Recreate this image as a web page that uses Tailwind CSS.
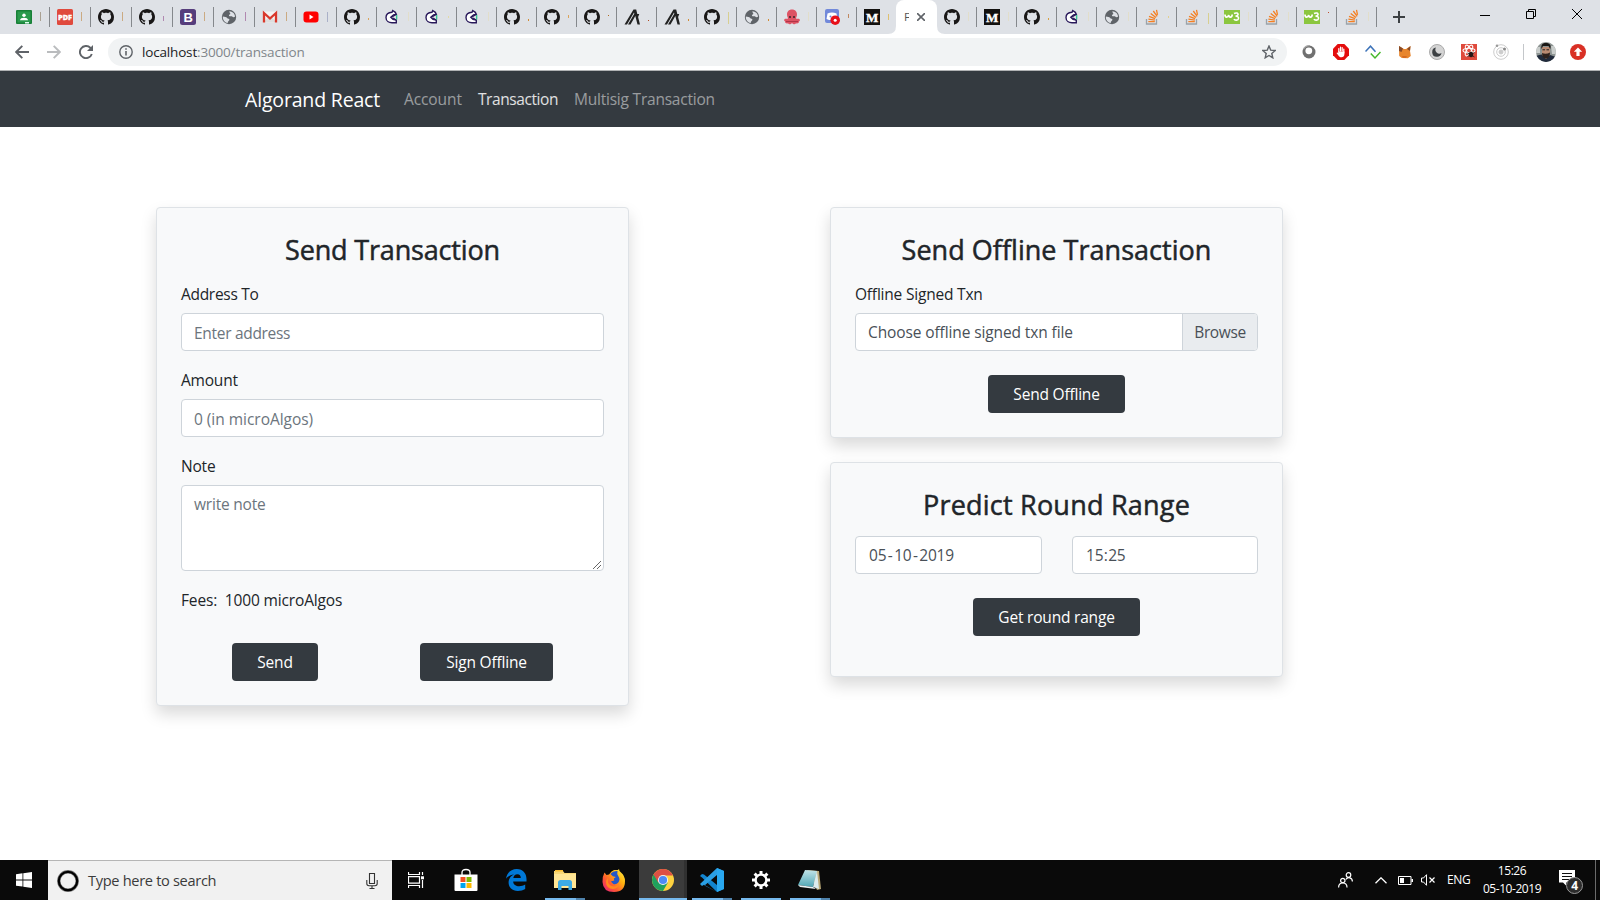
<!DOCTYPE html>
<html lang="en">
<head>
<meta charset="utf-8">
<title>Algorand React</title>
<script src="https://cdn.jsdelivr.net/npm/@tailwindcss/browser@4"></script>
</head>
<body class="w-[1600px] h-[900px] overflow-hidden bg-white flex flex-col text-[15.500px] tracking-[-0.2px] text-[#212529]" style="font-family:'Open Sans','Noto Sans',sans-serif">
<svg class="hidden">
  <symbol id="github" viewBox="0 0 16 16"><path fill="#191717" d="M8 0C3.58 0 0 3.58 0 8c0 3.54 2.29 6.53 5.47 7.59.4.07.55-.17.55-.38 0-.19-.01-.82-.01-1.49-2.01.37-2.53-.49-2.69-.94-.09-.23-.48-.94-.82-1.13-.28-.15-.68-.52-.01-.53.63-.01 1.08.58 1.23.82.72 1.21 1.87.87 2.33.66.07-.52.28-.87.51-1.07-1.78-.2-3.64-.89-3.64-3.95 0-.87.31-1.59.82-2.15-.08-.2-.36-1.02.08-2.12 0 0 .67-.21 2.2.82.64-.18 1.32-.27 2-.27s1.36.09 2 .27c1.53-1.04 2.2-.82 2.2-.82.44 1.1.16 1.92.08 2.12.51.56.82 1.27.82 2.15 0 3.07-1.87 3.75-3.65 3.95.29.25.54.73.54 1.48 0 1.07-.01 1.93-.01 2.2 0 .21.15.46.55.38A8.01 8.01 0 0 0 16 8c0-4.42-3.58-8-8-8z"/></symbol>
  <symbol id="classroom" viewBox="0 0 16 16"><rect y="1" width="16" height="14" rx="1" fill="#188038"/><rect x="1.5" y="2.5" width="13" height="11" fill="#2a9a4c"/><circle cx="8" cy="6.2" r="1.7" fill="#fff"/><path d="M4 11.3c0-1.700 2-2.500 4-2.500s4 .8 4 2.500z" fill="#fff"/><rect x="9" y="13" width="4" height="1.500" fill="#dfe"/></symbol>
  <symbol id="pdf" viewBox="0 0 16 16"><rect width="16" height="16" rx="1.500" fill="#e04a3d"/><text x="8" y="11" text-anchor="middle" textLength="14" lengthAdjust="spacingAndGlyphs" font-family="Open Sans" font-weight="800" font-size="7.500" letter-spacing="0" fill="#fff" stroke="#fff" stroke-width=".3">PDF</text></symbol>
  <symbol id="boot" viewBox="0 0 16 16"><rect width="16" height="16" rx="2.500" fill="#563d7c"/><text x="8.200" y="12.700" text-anchor="middle" font-family="Liberation Sans" font-weight="700" font-size="13" fill="#fff">B</text></symbol>
  <symbol id="globe" viewBox="0 0 16 16"><circle cx="8" cy="8" r="7.200" fill="#5f6368"/><path d="M1.800 7.500c2 .2 3.600.4 4.300 1.400.5.8 2.400.3 2.300 1.900-.1 1-1.600 1.200-1.700 3.200C3.500 13.500 1.600 10.500 1.800 7.500zM8.500 2.200c2.800.2 5.300 2.300 5.600 5.200-.9 1.200-2.300.9-2.900.2-.7-.8-2.700.2-3.200-.9-.4-1.200 1.500-1.200 1.300-2.300-.1-.8-1.300-1-.8-2.200z" fill="#dee1e6"/></symbol>
  <symbol id="gmail" viewBox="0 0 16 16"><path d="M1 2.500h14v11H1z" fill="#f3f3f3"/><path d="M1 13.500h14L8 7z" fill="#ddd"/><path d="M2 13.500V4l6 5.500L14 4v9.500" fill="none" stroke="#d9382c" stroke-width="2.300"/></symbol>
  <symbol id="yt" viewBox="0 0 16 16"><rect x=".5" y="2.500" width="15" height="11" rx="3" fill="#f00"/><path d="m6.500 5.500 4 2.500-4 2.500z" fill="#fff"/></symbol>
  <symbol id="dev" viewBox="0 0 16 16"><path d="M12.300 5.300 11.300 3.300 8.700 1.500 8 3.300C4.500 3.500 2 5.500 2 8.500c0 3.500 3 5.300 6 5.300h4.300V11L9 10.300 6.800 8.200 9.500 6z" fill="#fff" stroke="#29195a" stroke-width="1.400"/><path d="M7.500 8.200 12 5.500M9 9l3 2" stroke="#29195a" stroke-width="1.200"/><path d="M12.700 6v4.500" stroke="#22c08a" stroke-width="1.200"/></symbol>
  <symbol id="algo" viewBox="0 0 16 16"><path d="M.5 15.500 9.500.5h2.700L13.300 5h2l-1.200 3 1.900 7.500h-2.500L11.300 7l-4.800 8.500H4L10.300 4.700 10 3.600 3 15.500z" fill="#222"/></symbol>
  <symbol id="octo" viewBox="0 0 16 16"><path d="M8 .5c-3.300 0-5 2.300-5 5 0 1.800.8 2.700 1 3.800-.4 1.200-2.200 0-3.300.7-.9.700-.7 2.200.3 2.300 0 1.800 1.500 2.700 3 2 .8 1.500 3 1 4-.3 1 1.300 3.200 1.800 4 .3 1.500.7 3-.2 3-2 1-.1 1.200-1.600.3-2.300-1.100-.7-2.900.5-3.300-.7.2-1.100 1-2 1-3.800 0-2.700-1.700-5-5-5z" fill="#dd5364"/><path d="M2 12.500h12" stroke="#b03447"/><circle cx="6" cy="8" r=".9" fill="#222"/><circle cx="10" cy="8" r=".9" fill="#222"/></symbol>
  <symbol id="discord" viewBox="0 0 16 16"><rect x="1" width="14" height="14" rx="2" fill="#7289da"/><path d="M3.500 4.500q4.500-2 9 0l1 5.500-2.500 1H5l-2.500-1z" fill="#fff"/><circle cx="6.500" cy="7.500" r="1" fill="#7289da"/><circle cx="11.200" cy="11.200" r="4.800" fill="#e8101a"/><circle cx="11.200" cy="11.200" r="1.500" fill="#fff"/></symbol>
  <symbol id="medium" viewBox="0 0 16 16"><rect width="16" height="16" fill="#12100e"/><text x="8" y="12.600" text-anchor="middle" font-family="Liberation Serif" font-weight="700" font-size="13" fill="#fff" stroke="#fff" stroke-width=".4">M</text></symbol>
  <symbol id="so" viewBox="0 0 16 16"><path d="M2.500 10v5h10v-5" fill="none" stroke="#9aa3aa" stroke-width="1.300"/><path d="M4.300 12.700h6.500M4.400 10.100l6.500 1M5 7.300l6.100 2.300M6.700 4.400l5.300 4M9.300 2l3.900 5.300M12.500.8l1 5" stroke="#f48024" stroke-width="1.300"/></symbol>
  <symbol id="w3" viewBox="0 0 16 16"><rect y="1" width="16" height="14" fill="#8bc63f"/><path d="M1 5.500c0 3.500 3 3.500 3.700.5.300 3 3.300 3 3.500-.5" fill="none" stroke="#fff" stroke-width="1.700"/><path d="M10 4.500c1.800-1 4.500-.6 4 1.200-.3 1-1.500 1.300-2.500 1.500 1.700-.2 3.300.6 3 2.300-.3 2-3.700 2.200-4.500.5" fill="none" stroke="#fff" stroke-width="1.600"/></symbol>
</svg>

<!-- Tab strip -->
<div class="h-[34px] shrink-0 bg-[#dee1e6] flex items-stretch pl-[9px]">
  <div id="tabs" class="flex"></div>
  <div class="w-11 flex items-center justify-center"><svg class="w-3 h-3" viewBox="0 0 12 12"><path d="M6 0v12M0 6h12" stroke="#3c4043" stroke-width="2"/></svg></div>
  <div class="flex-1"></div>
  <div class="flex w-[138px] h-7">
    <div class="w-[46px] flex items-center justify-center pt-px"><svg class="w-[10px] h-[10px]" viewBox="0 0 10 10"><path d="M0 5.500h10" stroke="#000"/></svg></div>
    <div class="w-[46px] flex items-center justify-center"><svg class="w-[10px] h-[10px]" viewBox="0 0 10 10"><path d="M.5 2.500h7v7h-7zM2.500 2.500v-2h7v7h-2" fill="none" stroke="#000"/></svg></div>
    <div class="w-[46px] flex items-center justify-center"><svg class="w-[10px] h-[10px]" viewBox="0 0 10 10"><path d="m0 0 10 10M10 0 0 10" stroke="#000"/></svg></div>
  </div>
</div>

<!-- Address toolbar -->
<div class="h-9 shrink-0 bg-white flex items-center">
  <div class="w-[108px] flex items-center pl-[15px] gap-[18px]">
    <svg class="w-[14px] h-[14px]" viewBox="0 0 14 14"><path d="M14 7H1.500M7.300.8 1.200 7l6.100 6.200" fill="none" stroke="#5f6368" stroke-width="1.900"/></svg>
    <svg class="w-[14px] h-[14px]" viewBox="0 0 14 14"><path d="M0 7h12.500M6.700.8 12.800 7l-6.100 6.200" fill="none" stroke="#babcbe" stroke-width="1.900"/></svg>
    <svg class="w-[14px] h-[14px]" viewBox="0 0 14 14"><path d="M12.800 9A6.100 6.100 0 1 1 11.300 2.700L13 4.400" fill="none" stroke="#5f6368" stroke-width="1.900"/><path d="M14 0v6H8z" fill="#5f6368"/></svg>
  </div>
  <div class="w-[1179px] h-7 rounded-full bg-[#f1f3f4] flex items-center pl-[11px] pr-[11px]">
    <svg class="w-[14px] h-[14px]" viewBox="0 0 14 14"><circle cx="7" cy="7" r="6.200" fill="none" stroke="#5f6368" stroke-width="1.400"/><path d="M7 6v4.500M7 3.300v1.500" stroke="#5f6368" stroke-width="1.600"/></svg>
    <div class="ml-[9px] text-[13.500px] tracking-[-0.17px] leading-7 text-[#80868b]"><span class="text-[#202124]">localhost</span>:3000/transaction</div>
    <svg class="ml-auto w-[14px] h-[14px]" viewBox="0 0 14 14"><path d="m7 1 1.700 4.100 4.500.4-3.400 2.900 1 4.400L7 10.500l-3.800 2.300 1-4.400L.8 5.500l4.500-.4z" fill="none" stroke="#5f6368" stroke-width="1.400"/></svg>
  </div>
  <div class="flex items-center ml-[14px] gap-4">
    <svg class="w-4 h-4" viewBox="0 0 16 16"><circle cx="8" cy="8" r="6.500" fill="#707070"/><circle cx="7.800" cy="6.800" r="3.400" fill="#fff"/><path d="M2.500 5A6.500 6.500 0 0 1 9 1.600" stroke="#aaa" stroke-width="1.300" fill="none"/></svg>
    <svg class="w-4 h-4" viewBox="0 0 16 16"><path d="M4.700 0h6.600L16 4.700v6.600L11.300 16H4.700L0 11.300V4.700z" fill="#e40d0d"/><path d="M5.800 8V4.500M7.500 7V3M9.200 7V3.500M10.800 9V5" stroke="#fff" stroke-width="1.200" stroke-linecap="round"/><path d="M5.200 7.500h6.200v2.800c0 1.800-1.200 3-3 3-1.500 0-2.300-.7-3-1.800L3.500 9l1-.6.9.8z" fill="#fff"/></svg>
    <svg class="w-4 h-4" viewBox="0 0 16 16"><path d="M.5 7.500 5.500 2.200l5 5.500" fill="none" stroke="#3d73b9" stroke-width="1.500"/><path d="M5.800 9.500 10 14l5.500-6" fill="none" stroke="#45b82d" stroke-width="1.500"/></svg>
    <svg class="w-4 h-4" viewBox="0 0 16 16"><path d="m2 2 5 3h2l4.500-3-.5 5 .8 5-3 2.200-6-.2-2.600-2z" fill="#e8862d"/><path d="m2 2 4 2.500L4.500 8 2 7zM13.500 2 10 5l3 2z" fill="#894b27"/><path d="m5 12 5 .2-1 1.500H6z" fill="#d3661f"/></svg>
    <svg class="w-4 h-4" viewBox="0 0 16 16"><circle cx="8" cy="8" r="7.500" fill="#d4d4d4" stroke="#aaa"/><path d="M7 3.500A4.700 4.700 0 1 0 12.500 9 4 4 0 0 1 7 3.500z" fill="#3c4043"/></svg>
    <svg class="w-4 h-4" viewBox="0 0 16 16"><rect width="16" height="16" fill="#df4a3c"/><g fill="none" stroke="#fff" stroke-width="1.100"><ellipse cx="8" cy="6.500" rx="6" ry="2.300"/><ellipse cx="8" cy="6.500" rx="6" ry="2.300" transform="rotate(60 8 6.500)"/><ellipse cx="8" cy="6.500" rx="6" ry="2.300" transform="rotate(120 8 6.500)"/></g><ellipse cx="10" cy="10.500" rx="2.300" ry="2.800" fill="#261715"/><path d="m6.500 9 7 4M13.500 8.500l-7 4" stroke="#261715" stroke-width=".8"/></svg>
    <svg class="w-4 h-4" viewBox="0 0 16 16" fill="none" stroke="#ccc"><circle cx="8" cy="8" r="7.300"/><circle cx="8" cy="8" r="4.300"/><circle cx="8" cy="8" r="2" fill="#ccc"/><circle cx="11.500" cy="5" r="1.500" fill="#888" stroke="none"/><circle cx="4" cy="1.800" r="1.300" fill="#999" stroke="none"/></svg>
  </div>
  <div class="w-px h-4 bg-[#c4c7ca] ml-[14px]"></div>
  <svg class="ml-3 w-5 h-5" viewBox="0 0 20 20"><clipPath id="av"><circle cx="10" cy="10" r="10"/></clipPath><g clip-path="url(#av)"><path fill="#8d9492" d="M0 0h20v20H0z"/><path fill="#c9cdcb" d="M0 5h4v6H0zM15 4h5v8h-4z"/><path d="M0 14q9-4 20 1v5H0z" fill="#202a3b"/><path d="M6 5h8v8l-4 4-4-4z" fill="#b98a71"/><path d="M5.500 7C4.500 1.500 8 .5 11 1s4.500 2.500 3.200 6L12.500 4H7z" fill="#191715"/><path d="M6 11c2.500 1.300 5.500 1 8-.5 0 4-1.500 6-4 6s-4-2-4-5.500z" fill="#2d211d"/><path d="M6.500 7.800H9m1.500 0H13" stroke="#222"/></g></svg>
  <svg class="ml-[14px] w-4 h-4" viewBox="0 0 16 16"><circle cx="8" cy="8" r="8" fill="#d93025"/><path d="m8 3.500 4.200 4.300H9.600V12H6.400V7.800H3.800z" fill="#fff"/></svg>
</div>

<!-- Site navigation -->
<nav class="h-[57px] shrink-0 bg-[#343a40] border-t border-[#b0b2b4] flex items-center pt-0.5 pl-[245px]">
  <a class="text-[19.500px] leading-[30px] tracking-[-0.17px] text-white w-[159px] whitespace-nowrap">Algorand React</a>
  <a class="w-[74px] text-white/50 tracking-[-0.1px] whitespace-nowrap">Account</a>
  <a class="w-24 text-white/85 tracking-[-0.42px] whitespace-nowrap">Transaction</a>
  <a class="text-white/50 tracking-[-0.22px] whitespace-nowrap">Multisig Transaction</a>
</nav>

<!-- Page -->
<main class="flex-1 flex items-start pt-20 pl-[156px] gap-[201px]">
  <section class="w-[473px] h-[499px] rounded border border-[#dee2e6] bg-[#f8f9fa] p-6 shadow-[0_8px_16px_rgba(0,0,0,0.15)]">
    <h3 class="h-[49px] text-center text-[27px] leading-[36px] tracking-[-0.17px] [-webkit-text-stroke:0.5px_#212529]">Send Transaction</h3>
    <label class="block leading-[26px] mb-1.5 tracking-[-0.3px]">Address To</label>
    <div class="h-[38px] rounded border border-[#ced4da] bg-white px-3 leading-[39px] text-[#6c757d] mb-4 tracking-[-0.3px]">Enter address</div>
    <label class="block leading-[26px] mb-1.5">Amount</label>
    <div class="h-[38px] rounded border border-[#ced4da] bg-white px-3 leading-[39px] text-[#6c757d] mb-4 tracking-[-0.03px]">0 (in microAlgos)</div>
    <label class="block leading-[26px] mb-1.5">Note</label>
    <div class="h-[86px] rounded border border-[#ced4da] bg-white pl-3 pt-[6px] leading-6 text-[#6c757d] mb-4 flex justify-between">
      <span>write note</span>
      <svg class="self-end w-[10px] h-[10px] mr-px" viewBox="0 0 10 10"><path d="m1 9 8-8M5 9l4-4" stroke="#555" stroke-width=".9"/></svg>
    </div>
    <p class="leading-[26px] whitespace-pre mb-[30px] tracking-[-0.15px]">Fees:  1000 microAlgos</p>
    <div class="flex pl-[51px] gap-[102px] text-white">
      <button class="w-[86px] h-[38px] pt-0.5 rounded bg-[#343a40]">Send</button>
      <button class="w-[133px] h-[38px] pt-0.5 rounded bg-[#343a40]">Sign Offline</button>
    </div>
  </section>
  <div class="w-[453px] flex flex-col gap-6">
    <section class="h-[231px] rounded border border-[#dee2e6] bg-[#f8f9fa] p-6 shadow-[0_8px_16px_rgba(0,0,0,0.15)]">
      <h3 class="h-[49px] text-center text-[27px] leading-[36px] tracking-[0.03px] [-webkit-text-stroke:0.5px_#212529]">Send Offline Transaction</h3>
      <label class="block leading-[26px] mb-1.5">Offline Signed Txn</label>
      <div class="h-[38px] rounded border border-[#ced4da] bg-white leading-[36px] text-[#495057] mb-6 flex justify-between overflow-hidden">
        <span class="pl-3 tracking-[-0.11px]">Choose offline signed txn file</span>
        <span class="w-[75px] border-l border-[#ced4da] bg-[#e9ecef] text-center tracking-[-0.4px]">Browse</span>
      </div>
      <button class="block mx-auto w-[137px] h-[38px] pt-0.5 rounded bg-[#343a40] text-white">Send Offline</button>
    </section>
    <section class="h-[215px] rounded border border-[#dee2e6] bg-[#f8f9fa] p-6 shadow-[0_8px_16px_rgba(0,0,0,0.15)]">
      <h3 class="h-[49px] text-center text-[27px] leading-[36px] tracking-[0.22px] [-webkit-text-stroke:0.5px_#212529]">Predict Round Range</h3>
      <div class="flex gap-[30px] mb-6 text-[#495057] leading-[36px]">
        <div class="w-[187px] h-[38px] rounded border border-[#ced4da] bg-white pl-[13px]">05<span class="px-[1.500px]">-</span>10<span class="px-[1.500px]">-</span>2019</div>
        <div class="w-[186px] h-[38px] rounded border border-[#ced4da] bg-white pl-[13px]">15<span class="px-[0.500px]">:</span>25</div>
      </div>
      <button class="block mx-auto w-[167px] h-[38px] pt-0.5 rounded bg-[#343a40] text-white">Get round range</button>
    </section>
  </div>
</main>

<!-- Windows taskbar -->
<footer class="h-10 shrink-0 bg-[#0a0a0a] flex items-stretch">
  <div class="w-12 flex items-center justify-center"><svg class="w-4 h-4" viewBox="0 0 16 16"><path d="M0 2.200 6.500 1.300v6.200H0zM7.300 1.200 16 0v7.500H7.300zM0 8.400h6.500v6.200L0 13.700zM7.300 8.400H16V16l-8.700-1.200z" fill="#fff"/></svg></div>
  <div class="w-[344px] bg-[#f1f1f1] border-t border-[#b5b5b5] flex items-center pl-[9px] pr-[14px]">
    <svg class="w-[22px] h-[22px]" viewBox="0 0 22 22"><circle cx="11" cy="11" r="9.200" fill="none" stroke="#777" stroke-width="3.400"/><circle cx="11" cy="11" r="9.200" fill="none" stroke="#000" stroke-width="2.200"/></svg>
    <span class="ml-[9px] mb-0.5 text-[14.600px] tracking-[-0.32px] text-[#3b3b3b] leading-5">Type here to search</span>
    <svg class="ml-auto w-3 h-4" viewBox="0 0 12 16"><path d="M3.500.5h5v10h-5zM.8 7v3.500q0 2.200 2.200 2.200h6q2.200 0 2.200-2.200V7M6 13v2.500M3.500 15.500h5" fill="none" stroke="#333" stroke-width="1.100"/></svg>
  </div>
  <div class="w-12 flex items-center justify-center"><svg class="w-4 h-4" viewBox="0 0 16 16"><path d="M.5 0v2.500h11V0M.5 16v-2.500h11V16M.5 4.700h11v6.500H.5zM14.500 0v3M14.500 8v8" fill="none" stroke="#fff" stroke-width="1.200"/><path d="M13 4.300h3v3h-3z" fill="#fff"/></svg></div>
  <div class="w-[52px] flex items-center justify-center"><svg class="w-6 h-6" viewBox="0 0 24 24"><path d="M8 7V4.500q0-3 4-3t4 3V7" fill="none" stroke="#fff" stroke-width="1.300"/><path d="M.5 6.500h23v15.500q0 1-1 1h-21q-1 0-1-1z" fill="#fff"/><path d="M6.500 9h5v5h-5z" fill="#f25022"/><path d="M12.500 9h5v5h-5z" fill="#7fba00"/><path d="M6.500 15h5v5h-5z" fill="#00a4ef"/><path d="M12.500 15h5v5h-5z" fill="#ffb900"/></svg></div>
  <div class="w-12 flex items-center justify-center"><svg class="w-[21px] h-[22px]" viewBox="0 0 21 22"><path d="M0 9.800C.8 4 5 0 10.800 0 17 0 20.500 4.500 20.500 10v2.500H7.200c.2 3.300 2.700 4.700 6 4.700 2.300 0 4.200-.6 6-1.700v4.600c-2 1.200-4.500 1.900-7.300 1.900-5.800 0-9.300-3.600-9.300-8.500 0-3.800 2.200-6.700 5.600-8C4 6 1.500 7.500 0 9.800zm7.300-.8h7.500c0-2.300-1-3.700-3.500-3.700-2.200 0-3.600 1.500-4 3.700z" fill="#0078d7"/></svg></div>
  <div class="w-[50px] flex flex-col items-center">
    <svg class="w-[22px] h-5 mt-[10px]" viewBox="0 0 22 20"><path d="M0 1h9l1.500 2H22v15H0z" fill="#f8d775"/><path d="M1 0h8v1.500H1z" fill="#fbbc2f"/><path d="M0 4h22v14H0z" fill="#ffe594"/><path d="M4 20v-7.500q0-2.500 2.500-2.500h9q2.500 0 2.500 2.500V20h-3.500v-4h-7v4z" fill="#3daae5"/></svg>
    <div class="mt-auto flex w-10 h-[2px]"><div class="flex-1 bg-[#76b9ed]"></div><div class="w-[9px] bg-[#4f83ad]"></div></div>
  </div>
  <div class="w-[49px] flex items-center justify-center pr-0.5"><svg class="w-[23px] h-[23px]" viewBox="0 0 23 23"><defs><linearGradient id="ff" x1="1" y1="0" x2="0" y2="1"><stop offset="0" stop-color="#fff44f"/><stop offset=".35" stop-color="#ffb20e"/><stop offset=".65" stop-color="#ff5a30"/><stop offset="1" stop-color="#e31587"/></linearGradient></defs><path d="M2.500 3.500 4.500 6 7 5.500q2-3.500 5-4.500l4 0 1-1q0 2 2 3.500 4 3.500 4 8.500 0 11-11 11T.5 13Q0 8 2.500 3.500z" fill="url(#ff)"/><path d="M8.500 5Q11 1.800 15.500 2q-1 3 1 5.500 2 3-.2 6-2 2.500-5 1.500l-2.500-2.500 3.500-1-.5-2 2-1.500-3-.8z" fill="#2357c9"/><path d="M6 9q-1 8 6 8.500 4 0 5.500-4-1 6-6.500 6.500Q4 19.500 4 13q0-2.500 2-4z" fill="#ff8a1c"/></svg></div>
  <div class="w-12 bg-[#3b3b3b] flex flex-col items-center border-r-[3px] border-[#303030]">
    <svg class="w-[22px] h-[22px] mt-[9px] ml-0.5" viewBox="0 0 22 22"><circle cx="11" cy="11" r="11" fill="#fdd13f"/><path d="M11 11 1.500 5.500A11 11 0 0 0 11 22l4.800-8.300z" fill="#1fa15d"/><path d="M1.500 5.500A11 11 0 0 1 20.500 5.500L20.600 6.500H11L6.400 13.700z" fill="#dd5044"/><circle cx="11" cy="11" r="5.100" fill="#f1f1f1"/><circle cx="11" cy="11" r="4.100" fill="#4c8bf5"/></svg>
    <div class="mt-auto w-12 h-[2px] ml-[3px] bg-[#76b9ed]"></div>
  </div>
  <div class="w-[50px] flex flex-col items-center">
    <svg class="w-6 h-6 mt-2" viewBox="0 0 24 24"><path d="m17 0 7 3v18l-7 3L2 9.500 0 8l2-2 2 .5 13 10.500z" fill="#1284cf"/><path d="M17 24 4 16.800 2 18l-2-2L17 0v7L4.500 17.500z" fill="#2a9fe5"/><path d="m17 0 7 3v18l-7 3z" fill="#29a8f0"/></svg>
    <div class="mt-auto flex w-10 h-[2px]"><div class="flex-1 bg-[#76b9ed]"></div><div class="w-[9px] bg-[#4f83ad]"></div></div>
  </div>
  <div class="w-12 flex flex-col items-center">
    <svg class="w-[18px] h-[18px] mt-[11px]" viewBox="0 0 18 18"><circle cx="9" cy="9" r="5.400" fill="none" stroke="#fff" stroke-width="2.400"/><path d="M9 0v3M9 15v3M0 9h3M15 9h3M2.600 2.600l2.200 2.200M13.200 13.200l2.200 2.200M15.400 2.600l-2.200 2.200M4.800 13.200l-2.200 2.200" stroke="#fff" stroke-width="3"/></svg>
    <div class="mt-auto w-10 h-[2px] bg-[#76b9ed]"></div>
  </div>
  <div class="w-[50px] flex flex-col items-center">
    <svg class="w-6 h-[22px] mt-[9px]" viewBox="0 0 24 22"><defs><linearGradient id="np" x1="0" y1="0" x2="0" y2="1"><stop offset="0" stop-color="#c2e4e8"/><stop offset="1" stop-color="#4fa6b5"/></linearGradient></defs><path d="m9 1 12 1 2 18-4 1z" fill="#b9a877"/><path d="m7 1 12 1-4 16L0 16z" fill="url(#np)"/><path d="m0 16 15 2 3 2-16-2z" fill="#e9f1f2"/><path d="m19 2 2 18-6-2z" fill="#dcecee"/></svg>
    <div class="mt-auto flex w-10 h-[2px]"><div class="flex-1 bg-[#76b9ed]"></div><div class="w-[9px] bg-[#4f83ad]"></div></div>
  </div>
  <div class="flex-1"></div>
  <div class="flex items-center text-white">
    <svg class="w-[15px] h-4" viewBox="0 0 15 16"><g fill="none" stroke="#fff" stroke-width="1.200"><circle cx="4.800" cy="8.500" r="2.200"/><path d="M.6 15.500c0-6 8.400-6 8.400 0"/><circle cx="10.500" cy="3" r="2.300"/><path d="M7.800 7.500c2-3 6.600-2 6.600 2"/></g></svg>
    <svg class="ml-[22px] w-3 h-[7px]" viewBox="0 0 12 7"><path d="m.5 6.300 5.500-5.500 5.500 5.500" fill="none" stroke="#fff" stroke-width="1.300"/></svg>
    <svg class="ml-[11px] w-[15px] h-[9px]" viewBox="0 0 15 9"><path d="M.5.5h12.500v8H.5z" fill="none" stroke="#fff"/><path d="M2 2h4v5H2zM13.500 3H15v3h-1.500z" fill="#fff"/></svg>
    <svg class="ml-2 w-[15px] h-3" viewBox="0 0 15 12"><path d="M.5 4v4h2l3 3.300V.7L2.500 4z" fill="none" stroke="#fff"/><path d="m8.500 3.500 5 5m0-5-5 5" stroke="#fff" stroke-width="1.200"/></svg>
    <span class="ml-[11px] w-[35px] text-[12px] tracking-[-0.4px]">ENG</span>
    <div class="w-[60px] text-center text-[12px] leading-[18px] tracking-[-0.45px] whitespace-nowrap">15:26<br>05-10-2019</div>
    <svg class="ml-[17px] w-6 h-6 mt-1" viewBox="0 0 24 24"><path d="M0 0h16v12.500H7v3l-3-3H0z" fill="#fff"/><path d="M3 3.500h10M3 6.500h10M3 9.500h7" stroke="#111"/><circle cx="15.500" cy="15.500" r="8" fill="#2c2c2c" stroke="#999"/><text x="15.500" y="19.700" text-anchor="middle" font-size="12" font-weight="700" fill="#fff">4</text></svg>
  </div>
  <div class="w-px bg-[#6b6b6b] ml-[12px] mr-1"></div>
</footer>

<script>
  // Each entry: favicon, then the visible sliver of the tab title (top, height, colour)
  const tabs = [
    ['classroom',12,9,'#aaa193'],['pdf',12,9,'#cbaa82'],['github',12,9,'#cbaa82'],['github',16,5,'#b188b0'],
    ['boot',12,9,'#cbaa82'],['globe',12,9,'#b188b0'],['gmail',12,9,'#cbaa82'],['yt',12,10,'#aab0c8'],
    ['github',18,2,'#dba45c'],['dev',12,9,'#e2deca'],['dev',16,2,'#e2dba8'],['dev',12,9,'#e2deca'],
    ['github',19,2,'#d38b33'],['github',15,3,'#dba45c'],['github',15,1,'#b06a20'],['algo',20,1,'#b04a20'],
    ['algo',19,2,'#d38b33'],['github',12,12,'#d8cf90'],['globe',19,2,'#d38b33'],['octo',12,9,'#e2deca'],
    ['discord',14,4,'#c08860'],['medium',14,6,'#dfc070'],null,['github',12,9,'#e2deca'],
    ['medium',12,9,'#e2deca'],['github',18,2,'#d8a040'],['dev',12,9,'#e2deca'],['globe',12,9,'#e2deca'],
    ['so',16,2,'#e2d090'],['so',13,11,'#d8cf90'],['w3',12,9,'#e2deca'],['so',12,9,'#e2deca'],
    ['w3',12,1,'#c05030'],['so',12,9,'#e2deca']
  ];
  document.getElementById('tabs').innerHTML = tabs.map((t, i) => {
    if (!t) return `<div class="relative w-[41px] -ml-px bg-white rounded-t-lg flex items-center pl-2">
      <span class="w-[5px] overflow-hidden text-[11.500px] text-[#555]">F</span>
      <svg class="ml-2 w-2 h-2" viewBox="0 0 8 8"><path d="m0 0 8 8M8 0 0 8" stroke="#5f6368" stroke-width="1.600"/></svg>
      <svg class="absolute bottom-0 -left-2 w-2 h-2" viewBox="0 0 8 8"><path d="M8 0v8H0q8 0 8-8z" fill="#fff"/></svg>
      <svg class="absolute bottom-0 -right-2 w-2 h-2" viewBox="0 0 8 8"><path d="M0 0v8h8Q0 8 0 0z" fill="#fff"/></svg></div>`;
    const edge = tabs[i + 1] === null ? 'border-transparent' : 'border-[#85888c]';
    return `<div class="${i < 8 ? 'w-[41px]' : 'w-10'} flex items-start">
      <svg class="w-4 h-4 ml-[7px] mt-[9px] shrink-0"><use href="#${t[0]}"/></svg>
      <div class="w-px ml-2 shrink-0" style="margin-top:${t[1]}px;height:${t[2]}px;background:${t[3]}"></div>
      <div class="ml-auto h-5 mt-[7px] border-r ${edge}"></div></div>`;
  }).join('');
</script>
</body>
</html>
